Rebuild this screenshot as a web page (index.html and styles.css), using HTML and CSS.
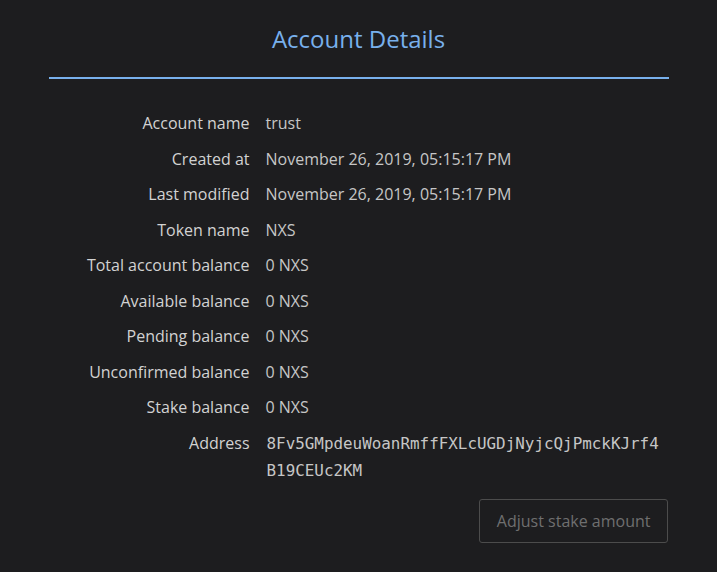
FILE: index.html
```html
<!DOCTYPE html>
<html>
<head>
<meta charset="utf-8">
<link rel="stylesheet" href="styles.css">
</head>
<body>
<div class="panel">
  <h1 class="title">Account Details</h1>
  <div class="details">
    <div class="label">Account name</div><div class="value">trust</div>
    <div class="label">Created at</div><div class="value">November 26, 2019, 05:15:17 PM</div>
    <div class="label">Last modified</div><div class="value">November 26, 2019, 05:15:17 PM</div>
    <div class="label">Token name</div><div class="value">NXS</div>
    <div class="label">Total account balance</div><div class="value">0 NXS</div>
    <div class="label">Available balance</div><div class="value">0 NXS</div>
    <div class="label">Pending balance</div><div class="value">0 NXS</div>
    <div class="label">Unconfirmed balance</div><div class="value">0 NXS</div>
    <div class="label">Stake balance</div><div class="value">0 NXS</div>
    <div class="label">Address</div><div class="value mono">8Fv5GMpdeuWoanRmffFXLcUGDjNyjcQjPmckKJrf4B19CEUc2KM</div>
  </div>
  <div class="actions">
    <button class="btn">Adjust stake amount</button>
  </div>
</div>
</body>
</html>
```
FILE: styles.css
```css
html, body {
  margin: 0;
  padding: 0;
  background: #1d1d1f;
  height: 100%;
}
body {
  font-family: "Open Sans", "Noto Sans", sans-serif;
  color: #d2d2d2;
}
.panel {
  width: 620px;
  margin: 0 auto;
  padding-top: 21px;
}
.title {
  margin: 0;
  font-size: 24px;
  font-weight: 400;
  line-height: 36px;
  text-align: center;
  color: #78b0ec;
  padding-bottom: 20px;
  border-bottom: 2px solid #78b0ec;
}
.details {
  display: grid;
  grid-template-columns: 201px 1fr;
  column-gap: 16px;
  row-gap: 10.5px;
  padding-top: 32px;
  font-size: 16px;
  line-height: 25px;
}
.label {
  text-align: right;
}
.value {
  color: #c6c6c6;
}
.mono {
  font-family: "DejaVu Sans Mono", monospace;
  font-size: 15.9px;
  line-height: 27px;
  word-break: break-all;
  width: 396px;
  margin-top: -1px;
  padding-left: 1px;
}
.actions {
  display: flex;
  justify-content: flex-end;
  padding-top: 15px;
}
.btn {
  font-family: "Open Sans", "Noto Sans", sans-serif;
  font-size: 16px;
  color: #6f6f6f;
  background: transparent;
  border: 1px solid #4c4c4c;
  border-radius: 3px;
  height: 44px;
  padding: 0 16px 0 17px;
  margin-right: 1px;
}
```
